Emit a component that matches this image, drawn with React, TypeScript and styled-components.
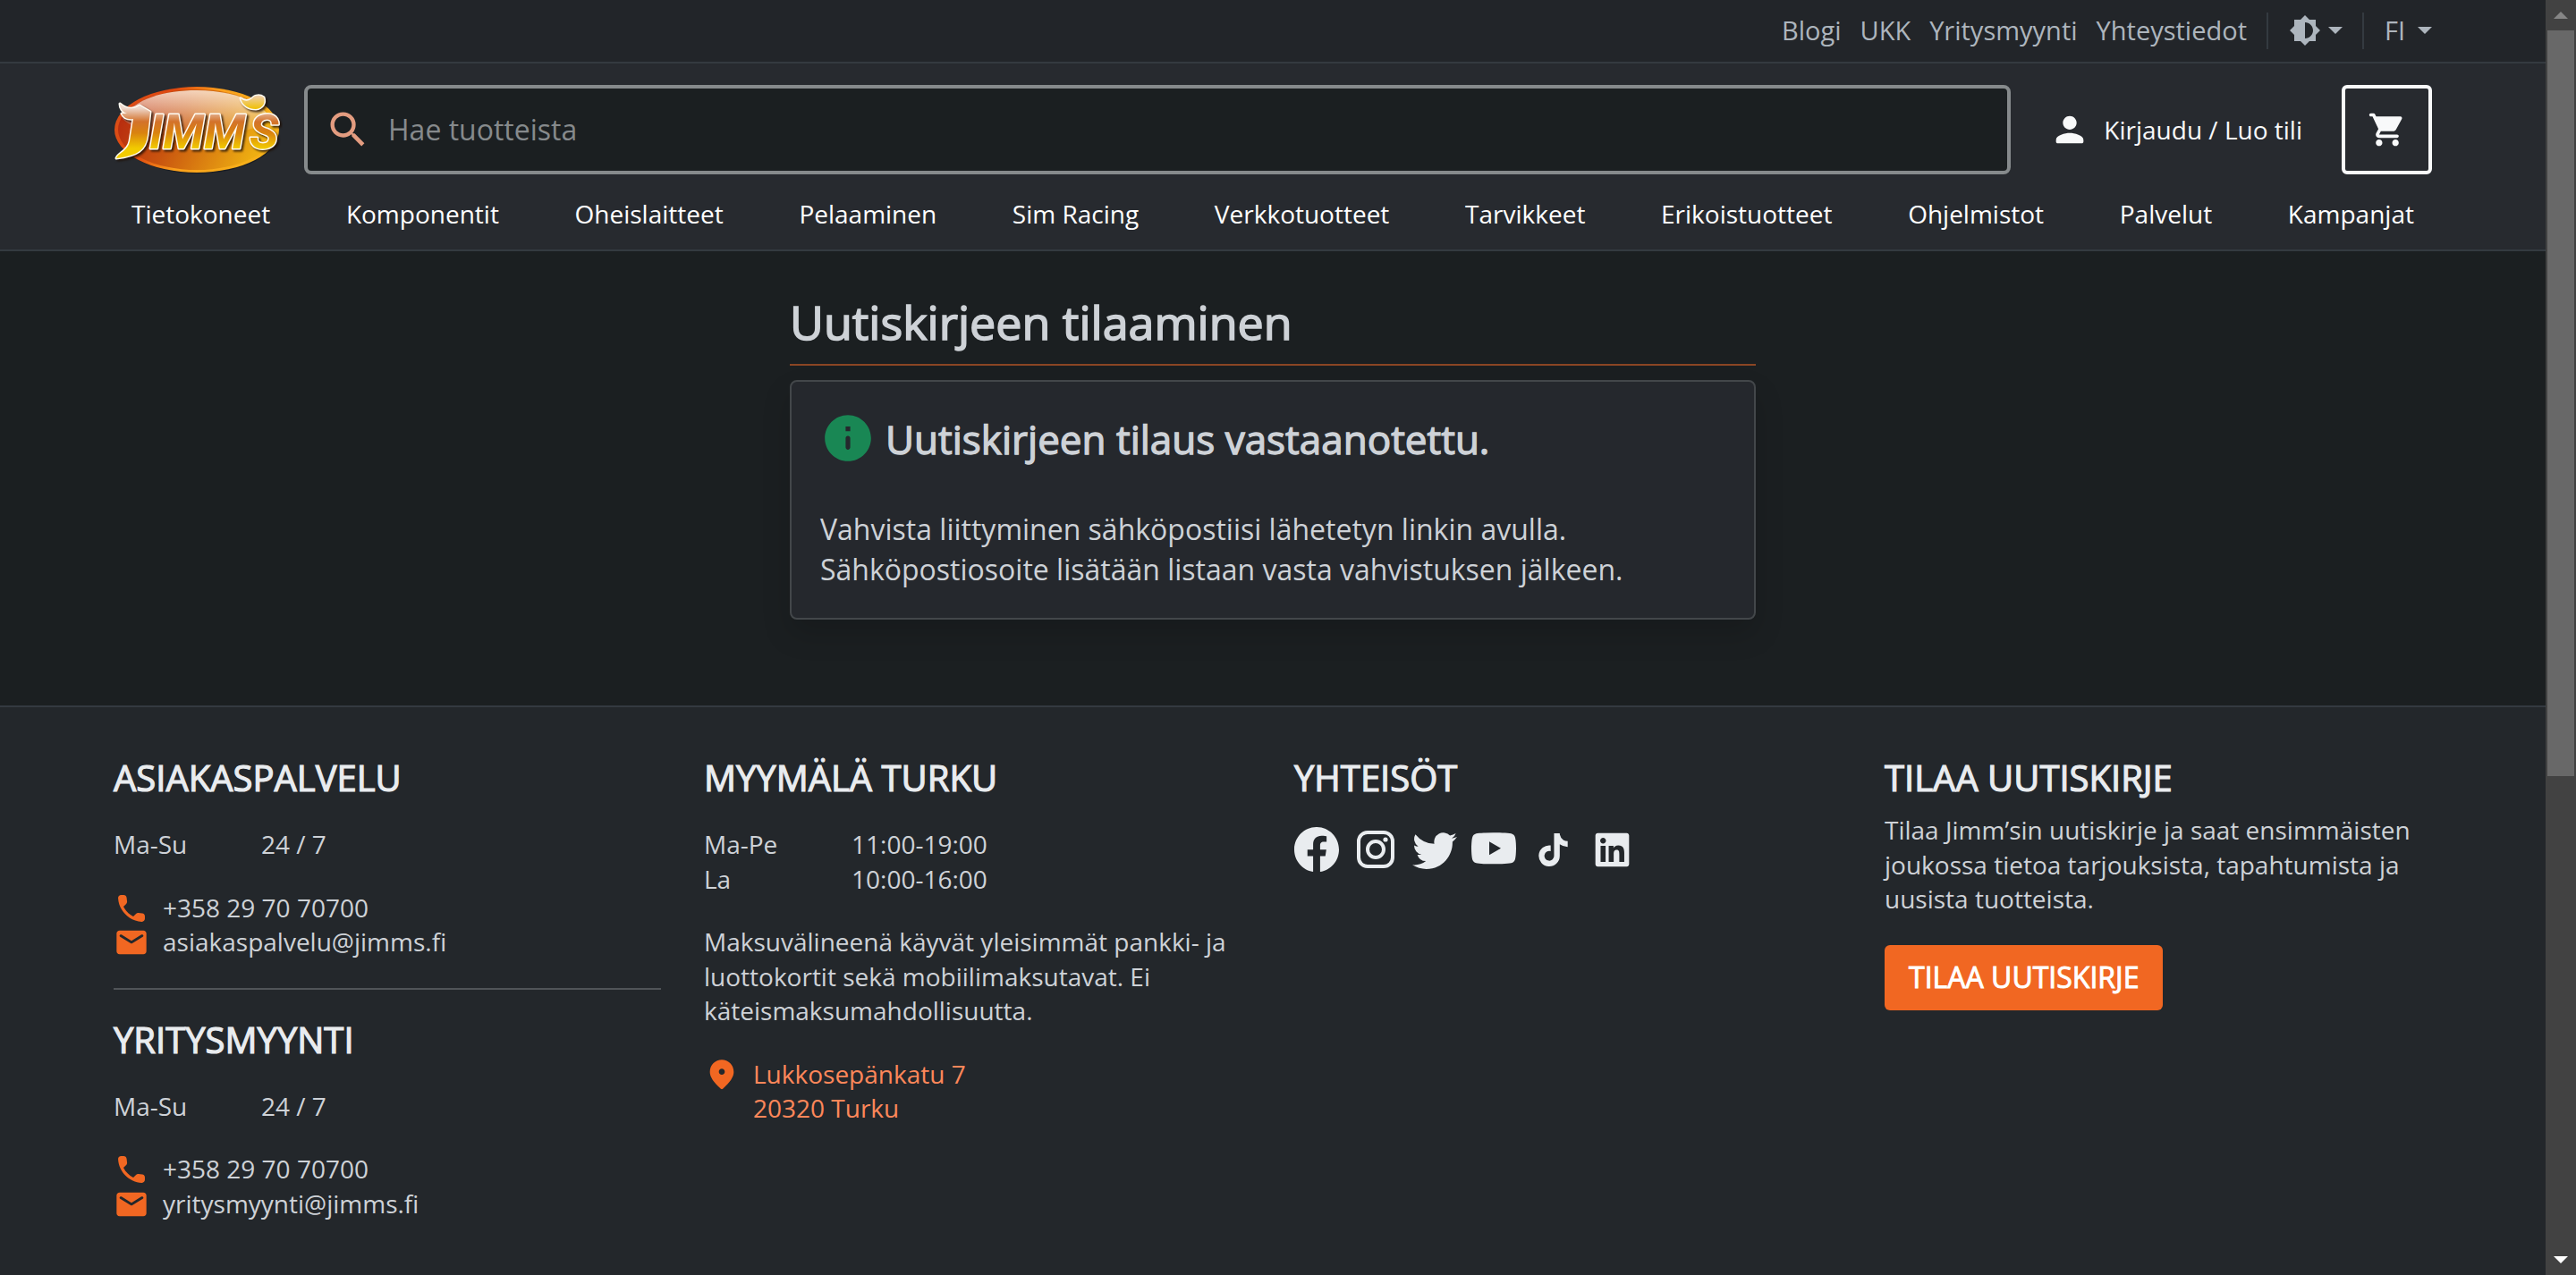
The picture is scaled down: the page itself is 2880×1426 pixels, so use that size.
import React from 'react';
import styled, { createGlobalStyle } from 'styled-components';
import { MdSearch, MdBrightness6 } from 'react-icons/md';
import { BsFacebook, BsTwitter, BsYoutube } from 'react-icons/bs';
import { FaTiktok, FaLinkedin } from 'react-icons/fa';

const color = {
  page: '#1b1f21',
  topBar: '#222529',
  header: '#272a2f',
  card: '#25282d',
  footer: '#23272b',
  line: '#343a40',
  orange: '#f16722',
  link: '#ff875a',
  text: '#ced2d7',
  heading: '#e9ecef',
  muted: '#adb5bd',
  white: '#f8f9fa',
};

const GlobalStyle = createGlobalStyle`
  *, *::before, *::after { box-sizing: border-box; }
  body {
    margin: 0;
    background: ${color.page};
    color: ${color.text};
    font-family: "Open Sans", "Noto Sans", sans-serif;
    font-size: 28px;
    line-height: 1.375;
  }
  h1, h2, h3, p, ul, dl, dd { margin: 0; padding: 0; font-weight: 400; }
  a { color: inherit; text-decoration: none; }
  button, input, select { font: inherit; color: inherit; }
  svg { display: block; flex: none; }
`;

const Window = styled.div`
  display: flex;
  height: 100vh;
  overflow: hidden;
`;

const Page = styled.div`
  flex: 1;
  min-width: 0;
  display: flex;
  flex-direction: column;
`;

const Container = styled.div`
  width: 100%;
  max-width: 2640px;
  margin: 0 auto;
  padding: 0 24px;
`;

const TopBar = styled.div`
  background: ${color.topBar};
  border-bottom: 2px solid ${color.line};
  color: ${color.muted};
  font-size: 29px;
`;

const TopRow = styled(Container)`
  display: flex;
  align-items: center;
  justify-content: flex-end;
  min-height: 69px;
  padding-bottom: 1px;
`;

const TopLinks = styled.nav`
  display: flex;
  gap: 21px;
`;

const Separator = styled.span`
  width: 2px;
  height: 41px;
  background: ${color.line};
  margin: 0 23px 0 22px;
`;

const ThemeButton = styled.button`
  display: flex;
  align-items: center;
  gap: 8px;
  padding: 0;
  border: 0;
  background: none;
`;

const LanguagePicker = styled.label`
  display: grid;
  grid-template-columns: 53px;
  align-items: center;
  > * { grid-area: 1 / 1; }
  > svg { justify-self: end; pointer-events: none; }
`;

const LanguageSelect = styled.select`
  appearance: none;
  width: 100%;
  padding: 0;
  border: 0;
  background: none;
`;

const Header = styled.header`
  background: ${color.header};
  border-bottom: 2px solid ${color.line};
`;

const HeaderRow = styled(Container)`
  display: flex;
  align-items: center;
  padding-top: 24px;
`;

const LogoLink = styled.a`
  margin-right: 24px;
`;

const SearchBox = styled.form`
  flex: 1;
  display: flex;
  align-items: center;
  gap: 19px;
  height: 100px;
  padding: 0 19px;
  border: 4px solid #868a8c;
  border-radius: 8px;
  background: ${color.page};
  color: #e39c80;
`;

const SearchInput = styled.input`
  flex: 1;
  min-width: 0;
  padding: 0;
  border: 0;
  outline: 0;
  background: none;
  color: ${color.text};
  font-size: 32px;
  &::placeholder { color: #868a8c; opacity: 1; }
`;

const Account = styled.a`
  display: flex;
  align-items: center;
  gap: 15px;
  margin: 0 44px 0 43px;
  color: ${color.white};
`;

const CartButton = styled.button`
  display: flex;
  align-items: center;
  justify-content: center;
  width: 101px;
  height: 100px;
  padding: 0;
  border: 4px solid ${color.white};
  border-radius: 6px;
  background: none;
  color: ${color.white};
`;

const MainNav = styled.nav`
  display: flex;
  justify-content: space-between;
  padding-top: 4px;
`;

const NavLink = styled.a`
  padding: 20px;
  line-height: 40px;
  color: #ffffff;
`;

const Main = styled.main`
  width: 100%;
  max-width: 1080px;
  margin: 0 auto;
  padding: 48px 0 96px;
`;

const Title = styled.h1`
  padding-bottom: 16px;
  margin-bottom: 16px;
  border-bottom: 2px solid #8a4524;
  font-size: 52px;
  line-height: 62px;
  -webkit-text-stroke: 0.03em currentColor;
`;

const Card = styled.section`
  padding: 32px;
  border: 2px solid #43474a;
  border-radius: 8px;
  background: ${color.card};
  box-shadow: 0 16px 32px rgba(0, 0, 0, 0.15);
  font-size: 32px;
  line-height: 45px;
`;

const CardTitle = styled.h2`
  display: flex;
  gap: 11px;
  margin-bottom: 46px;
  font-size: 44px;
  line-height: 64px;
  -webkit-text-stroke: 0.03em currentColor;
  > svg { color: #198754; }
`;

const Footer = styled.footer`
  flex: 1;
  background: ${color.footer};
  border-top: 2px solid ${color.line};
  padding: 55px 0;
`;

const FooterGrid = styled(Container)`
  display: grid;
  grid-template-columns: repeat(4, minmax(0, 1fr));
  gap: 48px;
`;

const FooterHeading = styled.h3`
  margin-bottom: 15px;
  color: ${color.heading};
  font-size: 40px;
  line-height: 48px;
  text-transform: uppercase;
  -webkit-text-stroke: 0.03em currentColor;
`;

const Hours = styled.dl`
  display: grid;
  grid-template-columns: 165px 1fr;
  margin: 31px 0 32px;
`;

const ContactRow = styled.a<{ $accent?: boolean }>`
  display: flex;
  gap: 15px;
  color: ${(p) => (p.$accent ? color.link : 'inherit')};
  > svg { margin-bottom: -2px; color: ${color.orange}; }
`;

const Divider = styled.hr`
  height: 2px;
  margin: 32px 0;
  border: 0;
  background: #505458;
`;

const FooterText = styled.p`
  margin-bottom: 32px;
`;

const SocialList = styled.ul`
  display: flex;
  gap: 16px;
  margin-top: 31px;
  list-style: none;
  color: ${color.heading};
`;

const SocialLink = styled.a`
  display: flex;
  align-items: center;
  justify-content: center;
  width: 50px;
  height: 50px;
`;

const SubscribeButton = styled.button`
  height: 73px;
  padding: 0 27px;
  border: 0;
  border-radius: 6px;
  background: ${color.orange};
  color: #ffffff;
  font-size: 32px;
  text-transform: uppercase;
  -webkit-text-stroke: 0.03em currentColor;
`;

const Scrollbar = styled.div`
  display: flex;
  flex-direction: column;
  align-items: center;
  width: 34px;
  background: #424242;
`;

const ScrollArrow = styled.span<{ $down?: boolean }>`
  display: flex;
  align-items: center;
  height: 34px;
  color: ${(p) => (p.$down ? '#ffffff' : '#868686')};
  > svg { transform: ${(p) => (p.$down ? 'none' : 'rotate(180deg)')}; }
`;

const ScrollTrack = styled.div`
  flex: 1;
`;

const ScrollThumb = styled.div`
  width: 30px;
  height: 61.4%;
  background: #686868;
`;

const iconPaths = {
  info: 'M12 2C6.48 2 2 6.48 2 12s4.48 10 10 10 10-4.48 10-10S17.52 2 12 2zm0 15c-.55 0-1-.45-1-1v-4c0-.55.45-1 1-1s1 .45 1 1v4c0 .55-.45 1-1 1zm1-8h-2V7h2v2z',
  phone:
    'M19.23 15.26l-2.54-.29c-.61-.07-1.21.14-1.64.57l-1.84 1.84c-2.83-1.44-5.15-3.75-6.59-6.59l1.85-1.85c.43-.43.64-1.03.57-1.64l-.29-2.52c-.12-1.01-.97-1.77-1.99-1.77H5.03c-1.13 0-2.07.94-2 2.07.53 8.54 7.36 15.36 15.89 15.89 1.13.07 2.07-.87 2.07-2v-1.73c.01-1.01-.75-1.86-1.76-1.98z',
  mail: 'M20 4H4c-1.1 0-2 .9-2 2v12c0 1.1.9 2 2 2h16c1.1 0 2-.9 2-2V6c0-1.1-.9-2-2-2zm-.4 4.25l-7.07 4.42c-.32.2-.74.2-1.06 0L4.4 8.25c-.25-.16-.4-.43-.4-.72 0-.67.73-1.07 1.3-.72L12 11l6.7-4.19c.57-.35 1.3.05 1.3.72 0 .29-.15.56-.4.72z',
  pin: 'M12 2c-4.2 0-8 3.22-8 8.2 0 3.18 2.45 6.92 7.34 11.23.38.33.95.33 1.33 0C17.55 17.12 20 13.38 20 10.2 20 5.22 16.2 2 12 2zm0 10c-1.1 0-2-.9-2-2s.9-2 2-2 2 .9 2 2-.9 2-2 2z',
  person:
    'M12 12c2.21 0 4-1.79 4-4s-1.79-4-4-4-4 1.79-4 4 1.79 4 4 4zm0 2c-2.67 0-8 1.34-8 4v1c0 .55.45 1 1 1h14c.55 0 1-.45 1-1v-1c0-2.66-5.33-4-8-4z',
  cart: 'M7 18c-1.1 0-1.99.9-1.99 2S5.9 22 7 22s2-.9 2-2-.9-2-2-2zM1 3c0 .55.45 1 1 1h1l3.6 7.59-1.35 2.44C4.52 15.37 5.48 17 7 17h11c.55 0 1-.45 1-1s-.45-1-1-1H7l1.1-2h7.45c.75 0 1.41-.41 1.75-1.03l3.58-6.49C21.25 4.82 20.76 4 20.01 4H5.21l-.67-1.43c-.16-.35-.52-.57-.9-.57H2c-.55 0-1 .45-1 1zm16 15c-1.1 0-1.99.9-1.99 2s.89 2 1.99 2 2-.9 2-2-.9-2-2-2z',
};

const Icon = ({ name, size }: { name: keyof typeof iconPaths; size: number }) => (
  <svg width={size} height={size} viewBox="0 0 24 24" fill="currentColor" aria-hidden="true">
    <path d={iconPaths[name]} />
  </svg>
);

const Caret = () => (
  <svg width="16" height="8" viewBox="0 0 16 8" fill="currentColor" aria-hidden="true">
    <path d="M0 0h16L8 8z" />
  </svg>
);

const InstagramIcon = () => (
  <svg width="42" height="42" viewBox="0 0 42 42" fill="none" stroke="currentColor" strokeWidth="4" aria-hidden="true">
    <rect x="2" y="2" width="38" height="38" rx="10" />
    <circle cx="21" cy="21" r="9" />
    <circle cx="32" cy="10" r="2.6" fill="currentColor" stroke="none" />
  </svg>
);

const Logo = () => (
  <svg width="189" height="100" viewBox="0 0 189 100" role="img" aria-label="Jimm's">
    <defs>
      <linearGradient id="rim" x1="0" y1="0" x2="1" y2="0.3">
        <stop offset="0" stopColor="#d8501a" />
        <stop offset="0.35" stopColor="#e0480f" />
        <stop offset="0.6" stopColor="#fba01c" />
        <stop offset="1" stopColor="#f6b01a" />
      </linearGradient>
      <linearGradient id="face" x1="0" y1="0" x2="1" y2="0.25">
        <stop offset="0" stopColor="#b3220f" />
        <stop offset="0.45" stopColor="#c9540f" />
        <stop offset="1" stopColor="#edae12" />
      </linearGradient>
      <linearGradient id="gloss" x1="0" y1="0" x2="0" y2="1">
        <stop offset="0" stopColor="#fff3e6" stopOpacity="0.8" />
        <stop offset="1" stopColor="#ffffff" stopOpacity="0" />
      </linearGradient>
      <linearGradient id="letters" gradientUnits="userSpaceOnUse" x1="0" y1="26" x2="0" y2="76">
        <stop offset="0" stopColor="#eed8cc" />
        <stop offset="0.3" stopColor="#d3722b" />
        <stop offset="0.55" stopColor="#d9820f" />
        <stop offset="0.9" stopColor="#f2cb00" />
      </linearGradient>
      <linearGradient id="flame" x1="0" y1="0" x2="0" y2="1">
        <stop offset="0" stopColor="#f0cfae" />
        <stop offset="1" stopColor="#f0c000" />
      </linearGradient>
    </defs>
    <ellipse cx="94" cy="52" rx="91" ry="47" fill="#15171a" opacity="0.7" />
    <ellipse cx="93" cy="50" rx="92" ry="48" fill="url(#rim)" />
    <ellipse cx="93" cy="50" rx="88" ry="45" fill="url(#face)" />
    <path d="M10 38C22 15 58 6 93 6s70 10 83 32c-20 14-50 20-83 20S25 52 10 38z" fill="url(#gloss)" />
    <g
      fill="url(#letters)"
      stroke="#fffaf0"
      strokeWidth="3"
      strokeLinejoin="round"
      paintOrder="stroke"
      fontFamily="Roboto, sans-serif"
      fontWeight="700"
      fontStyle="italic"
      fontSize="54"
      filter="drop-shadow(2px 2px 1px rgba(30, 15, 5, 0.8))"
    >
      <path d="M29 23l12 7-3 26c-2 17-11 23-35 26 2-6 13-8 15-19l4-25c-7 1-11-2-13-6l6 0c-5-2-8-6-8-11 7 6 15 7 22 2z" />
      <text x="40" y="71">IMM</text>
      <text x="152" y="71">S</text>
      <path d="M142 15c5 4 9 3 13 0 3-4 9-4 13-1 2 6-1 12-9 13-8 0-15-4-17-12z" fill="url(#flame)" />
    </g>
  </svg>
);

const topLinks = ['Blogi', 'UKK', 'Yritysmyynti', 'Yhteystiedot'];

const categories = [
  'Tietokoneet',
  'Komponentit',
  'Oheislaitteet',
  'Pelaaminen',
  'Sim Racing',
  'Verkkotuotteet',
  'Tarvikkeet',
  'Erikoistuotteet',
  'Ohjelmistot',
  'Palvelut',
  'Kampanjat',
];

const socials = [
  { name: 'Facebook', icon: <BsFacebook size={50} /> },
  { name: 'Instagram', icon: <InstagramIcon /> },
  { name: 'Twitter', icon: <BsTwitter size={50} /> },
  { name: 'YouTube', icon: <BsYoutube size={50} /> },
  { name: 'TikTok', icon: <FaTiktok size={37} /> },
  { name: 'LinkedIn', icon: <FaLinkedin size={43} /> },
];

const OpeningHours = ({ rows }: { rows: [string, string][] }) => (
  <Hours>
    {rows.map(([day, time]) => (
      <React.Fragment key={day}>
        <dt>{day}</dt>
        <dd>{time}</dd>
      </React.Fragment>
    ))}
  </Hours>
);

const ContactBlock = ({ title, email }: { title: string; email: string }) => (
  <section>
    <FooterHeading>{title}</FooterHeading>
    <OpeningHours rows={[['Ma-Su', '24 / 7']]} />
    <ContactRow href="tel:+358297070700">
      <Icon name="phone" size={40} />
      +358 29 70 70700
    </ContactRow>
    <ContactRow href={`mailto:${email}`}>
      <Icon name="mail" size={40} />
      {email}
    </ContactRow>
  </section>
);

export default function App() {
  return (
    <Window>
      <GlobalStyle />
      <Page>
        <TopBar>
          <TopRow>
            <TopLinks>
              {topLinks.map((label) => (
                <a key={label} href="#">{label}</a>
              ))}
            </TopLinks>
            <Separator />
            <ThemeButton type="button" aria-label="Teema">
              <MdBrightness6 size={36} />
              <Caret />
            </ThemeButton>
            <Separator />
            <LanguagePicker>
              <LanguageSelect aria-label="Kieli" defaultValue="FI">
                <option>FI</option>
                <option>EN</option>
              </LanguageSelect>
              <Caret />
            </LanguagePicker>
          </TopRow>
        </TopBar>

        <Header>
          <HeaderRow>
            <LogoLink href="#"><Logo /></LogoLink>
            <SearchBox role="search">
              <MdSearch size={52} />
              <SearchInput type="search" aria-label="Hae tuotteista" placeholder="Hae tuotteista" />
            </SearchBox>
            <Account href="#">
              <Icon name="person" size={46} />
              Kirjaudu / Luo tili
            </Account>
            <CartButton type="button" aria-label="Ostoskori">
              <Icon name="cart" size={44} />
            </CartButton>
          </HeaderRow>
          <Container>
            <MainNav>
              {categories.map((label) => (
                <NavLink key={label} href="#">{label}</NavLink>
              ))}
            </MainNav>
          </Container>
        </Header>

        <Main>
          <Title>Uutiskirjeen tilaaminen</Title>
          <Card>
            <CardTitle>
              <Icon name="info" size={62} />
              Uutiskirjeen tilaus vastaanotettu.
            </CardTitle>
            <p>
              Vahvista liittyminen sähköpostiisi lähetetyn linkin avulla.
              <br />
              Sähköpostiosoite lisätään listaan vasta vahvistuksen jälkeen.
            </p>
          </Card>
        </Main>

        <Footer>
          <FooterGrid>
            <div>
              <ContactBlock title="Asiakaspalvelu" email="asiakaspalvelu@jimms.fi" />
              <Divider />
              <ContactBlock title="Yritysmyynti" email="yritysmyynti@jimms.fi" />
            </div>
            <section>
              <FooterHeading>Myymälä Turku</FooterHeading>
              <OpeningHours rows={[['Ma-Pe', '11:00-19:00'], ['La', '10:00-16:00']]} />
              <FooterText>
                Maksuvälineenä käyvät yleisimmät pankki- ja luottokortit sekä mobiilimaksutavat. Ei
                käteismaksumahdollisuutta.
              </FooterText>
              <ContactRow href="#" $accent>
                <Icon name="pin" size={40} />
                <span>
                  Lukkosepänkatu 7
                  <br />
                  20320 Turku
                </span>
              </ContactRow>
            </section>
            <section>
              <FooterHeading>Yhteisöt</FooterHeading>
              <SocialList>
                {socials.map(({ name, icon }) => (
                  <li key={name}>
                    <SocialLink href="#" aria-label={name}>{icon}</SocialLink>
                  </li>
                ))}
              </SocialList>
            </section>
            <section>
              <FooterHeading>Tilaa uutiskirje</FooterHeading>
              <FooterText>
                Tilaa Jimm’sin uutiskirje ja saat ensimmäisten joukossa tietoa tarjouksista, tapahtumista ja uusista
                tuotteista.
              </FooterText>
              <SubscribeButton type="button">Tilaa uutiskirje</SubscribeButton>
            </section>
          </FooterGrid>
        </Footer>
      </Page>
      <Scrollbar aria-hidden="true">
        <ScrollArrow><Caret /></ScrollArrow>
        <ScrollTrack><ScrollThumb /></ScrollTrack>
        <ScrollArrow $down><Caret /></ScrollArrow>
      </Scrollbar>
    </Window>
  );
}
